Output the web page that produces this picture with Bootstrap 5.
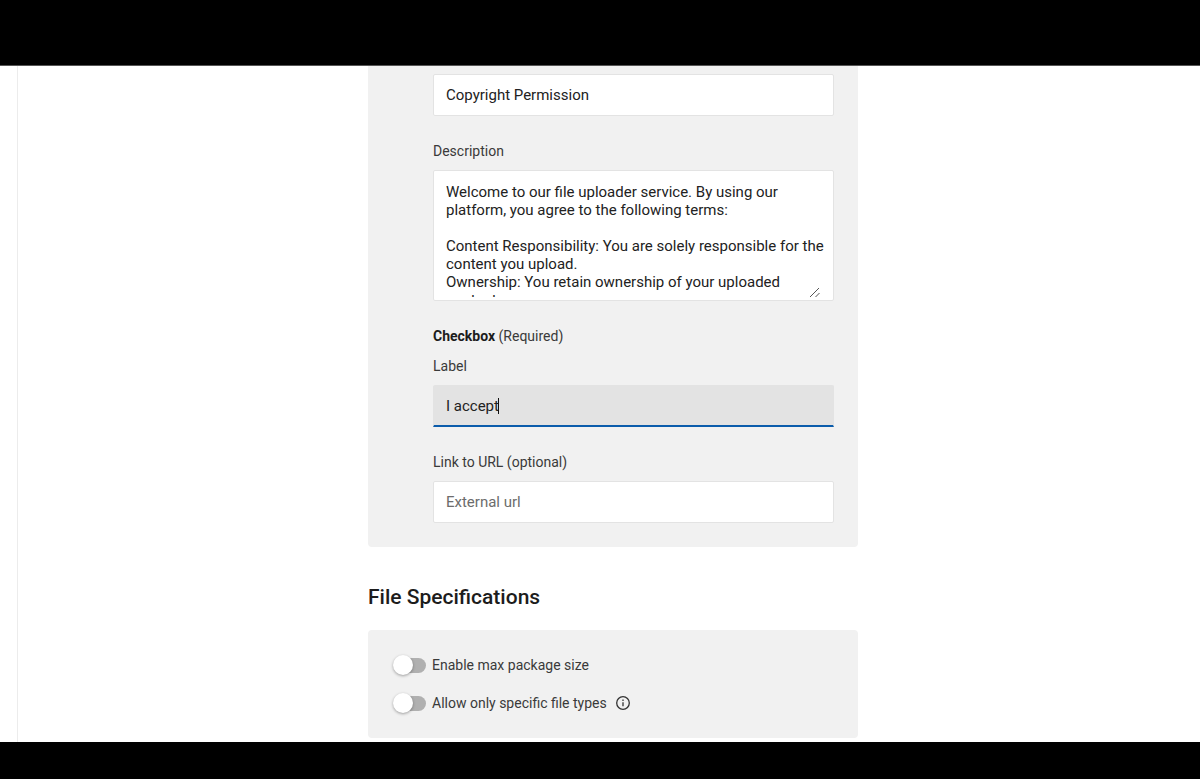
<!DOCTYPE html>
<html lang="en">
<head>
<meta charset="utf-8">
<meta name="viewport" content="width=device-width, initial-scale=1">
<title>File Specifications</title>
<link href="https://cdn.jsdelivr.net/npm/bootstrap@5.3.0/dist/css/bootstrap.min.css" rel="stylesheet">
<style>
  body { font-family: Roboto, "Liberation Sans", sans-serif; font-size: 14px; line-height: 20px; color: #3a3a3a; background: #fff; }
  .bar-top { height: 66px; background: #000; border-bottom: 1px solid #555; }
  .bar-bottom { height: 37px; background: #000; }
  .rail { width: 18px; border-right: 1px solid #ececec; }
  .form-column { width: 100%; max-width: 490px; }
  .panel { background: #f1f1f1; border-radius: 4px; }
  .panel-terms { padding: 8px 24px 24px 65px; border-radius: 0 0 4px 4px; }
  .panel-files { padding: 24px; gap: 16px; }
  .field-group { margin-bottom: 25px; }
  .field-label { display: block; margin-bottom: 9px; }
  .field-heading { margin-bottom: 10px; }
  .field-box.form-control { height: 42px; padding: 0 12px; font-size: 15px; line-height: 20px; color: #222; background: #fff; border: 1px solid #e3e3e3; border-radius: 2px; box-shadow: none; }
  .field-box.form-control::placeholder { color: #6c6c6c; }
  .field-box.form-control.field-active { background: #e3e3e3; border-bottom: 2px solid #0b5cab; border-radius: 2px 2px 0 0; }
  .caret { position: absolute; left: 65px; top: 13px; width: 1px; height: 16px; background: #111; }
  .area-box { height: 131px; padding: 12px 4px 3px 12px; background: #fff; border: 1px solid #e3e3e3; border-radius: 2px; }
  .area-box textarea { display: block; width: 100%; height: 100%; padding: 0; border: 0; outline: 0; overflow: hidden; resize: none; font-size: 15px; line-height: 18px; color: #222; background: transparent; }
  .grip { position: absolute; right: 12px; bottom: 2px; pointer-events: none; }
  .section-title { margin: 36px 0 19px; font-size: 21px; line-height: 28px; font-weight: 500; color: #1c1c1c; }
  .switch-row { height: 22px; }
  .toggle { appearance: none; position: relative; flex: none; width: 34px; height: 22px; margin: 0 6px 0 0; }
  .toggle::before { content: ""; position: absolute; left: 6px; top: 4px; width: 28px; height: 15px; border-radius: 8px; background: #b0b0b0; }
  .toggle::after { content: ""; position: absolute; left: 1px; top: 1px; width: 20px; height: 20px; border-radius: 50%; background: #fff; box-shadow: 0 1px 3px rgba(0,0,0,.35); }
  .toggle:checked::after { left: 14px; }
  .strong-label { font-weight: 700; color: #1c1c1c; }
</style>
</head>
<body>
<div class="d-flex flex-column vh-100 overflow-hidden">
  <div class="bar-top flex-shrink-0"></div>
  <div class="d-flex flex-grow-1 overflow-hidden">
    <aside class="rail flex-shrink-0"></aside>
    <main class="flex-grow-1 d-flex justify-content-center ps-2">
      <form class="form-column">
        <section class="panel panel-terms">
          <div class="field-group">
            <input type="text" class="form-control field-box" value="Copyright Permission" aria-label="Title">
          </div>
          <div class="field-group">
            <label class="field-label" for="description">Description</label>
            <div class="area-box position-relative">
              <textarea id="description" spellcheck="false">Welcome to our file uploader service. By using our platform, you agree to the following terms:

Content Responsibility: You are solely responsible for the content you upload.
Ownership: You retain ownership of your uploaded content.</textarea>
              <svg class="grip" width="12" height="11" viewBox="0 0 12 11" fill="none" stroke="#555" aria-hidden="true">
                <path d="M1 10L10 1M6.500 10L10.500 6"/>
              </svg>
            </div>
          </div>
          <div class="field-heading"><span class="strong-label">Checkbox</span> (Required)</div>
          <div class="field-group">
            <label class="field-label" for="accept">Label</label>
            <div class="position-relative">
              <input type="text" id="accept" class="form-control field-box field-active" value="I accept">
              <span class="caret"></span>
            </div>
          </div>
          <div>
            <label class="field-label" for="link">Link to URL (optional)</label>
            <input type="url" id="link" class="form-control field-box" placeholder="External url">
          </div>
        </section>
        <h2 class="section-title">File Specifications</h2>
        <section class="panel panel-files d-flex flex-column">
          <div class="switch-row d-flex align-items-center">
            <input type="checkbox" role="switch" class="toggle" id="maxSize">
            <label for="maxSize">Enable max package size</label>
          </div>
          <div class="switch-row d-flex align-items-center">
            <input type="checkbox" role="switch" class="toggle" id="fileTypes">
            <label for="fileTypes">Allow only specific file types</label>
            <svg class="ms-2" width="16" height="16" viewBox="0 0 16 16" fill="none" stroke="#333" aria-hidden="true">
              <circle cx="8" cy="8" r="6.3" stroke-width="1.3"/>
              <path d="M8 7.2v4M8 4.6v1.4" stroke-width="1.3"/>
            </svg>
          </div>
        </section>
      </form>
    </main>
  </div>
  <div class="bar-bottom flex-shrink-0"></div>
</div>
<script src="https://cdn.jsdelivr.net/npm/bootstrap@5.3.0/dist/js/bootstrap.bundle.min.js"></script>
</body>
</html>
